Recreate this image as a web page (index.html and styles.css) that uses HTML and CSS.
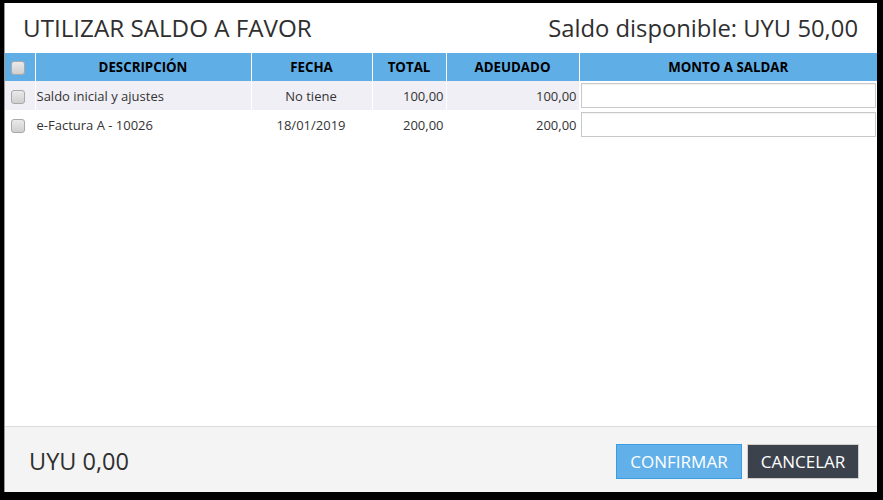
FILE: index.html
```html
<!DOCTYPE html>
<html>
<head>
<meta charset="utf-8">
<link rel="stylesheet" href="styles.css">
</head>
<body>
<div class="modal">
  <div class="modal-header">
    <h1 class="title">UTILIZAR SALDO A FAVOR</h1>
    <div class="saldo">Saldo disponible: UYU 50,00</div>
  </div>
  <div class="modal-body">
    <table class="grid">
      <colgroup>
        <col class="c-check"><col class="c-desc"><col class="c-fecha"><col class="c-total"><col class="c-adeu"><col class="c-monto">
      </colgroup>
      <thead>
        <tr>
          <th class="chk"><span class="cb"></span></th>
          <th>DESCRIPCIÓN</th>
          <th>FECHA</th>
          <th>TOTAL</th>
          <th>ADEUDADO</th>
          <th>MONTO A SALDAR</th>
        </tr>
      </thead>
      <tbody>
        <tr class="odd">
          <td class="chk"><span class="cb"></span></td>
          <td>Saldo inicial y ajustes</td>
          <td class="center">No tiene</td>
          <td class="num">100,00</td>
          <td class="num">100,00</td>
          <td class="inp"><input type="text" class="field"></td>
        </tr>
        <tr>
          <td class="chk"><span class="cb"></span></td>
          <td>e-Factura A - 10026</td>
          <td class="center">18/01/2019</td>
          <td class="num">200,00</td>
          <td class="num">200,00</td>
          <td class="inp"><input type="text" class="field"></td>
        </tr>
      </tbody>
    </table>
  </div>
  <div class="modal-footer">
    <div class="total">UYU 0,00</div>
    <div class="actions">
      <button class="btn btn-primary">CONFIRMAR</button>
      <button class="btn btn-dark">CANCELAR</button>
    </div>
  </div>
</div>
</body>
</html>
```
FILE: styles.css
```css
html, body {
  margin: 0;
  padding: 0;
  background: #000;
  height: 500px;
  overflow: hidden;
}
body {
  font-family: "Open Sans", "Noto Sans", sans-serif;
  color: #333;
  padding: 3px 6px 8px 4px;
  box-sizing: border-box;
}
.modal {
  height: 489px;
  background: #fff;
  display: flex;
  flex-direction: column;
  border-left: 1px solid #9a9a9a;
  box-sizing: border-box;
}
.modal-header {
  height: 50px;
  display: flex;
  align-items: center;
  justify-content: space-between;
  padding: 0 19px 1px 18px;
  flex: none;
  box-sizing: border-box;
}
.title {
  margin: 0;
  font-weight: 400;
  font-size: 24.2px;
  color: #2f2f2f;
}
.saldo {
  font-size: 23.8px;
  color: #2f2f2f;
}
.modal-body {
  flex: 1;
}
.grid {
  width: 100%;
  border-collapse: collapse;
  table-layout: fixed;
  font-size: 13px;
}
.c-check { width: 30px; }
.c-desc { width: 216px; }
.c-fecha { width: 121px; }
.c-total { width: 74px; }
.c-adeu { width: 133px; }
.grid th {
  background: #5fafe6;
  color: #000;
  font-weight: 700;
  font-size: 13.3px;
  height: 28px;
  padding: 0;
  border-left: 1px solid #fff;
  text-align: center;
  vertical-align: middle;
}
.grid th:first-child { border-left: 0; }
.grid td {
  height: 29px;
  padding: 0 2px 0 1px;
  border-left: 1px solid #fff;
  vertical-align: middle;
  color: #333;
  white-space: nowrap;
}
.grid td:first-child { border-left: 0; }
.grid tr.odd td { background: #f0eff5; }
.grid td.chk, .grid th.chk { text-align: left; padding: 0 0 0 6px; }
.center { text-align: center; }
.num { text-align: right; }
.grid td.inp { padding: 0 1px 0 1px; background: #fff !important; }
.cb {
  display: inline-block;
  width: 12px;
  height: 12px;
  border: 1px solid #a9a9a9;
  border-radius: 3px;
  background: linear-gradient(#eaeaea, #cfcfcf);
  vertical-align: middle;
  box-sizing: content-box;
}
.field {
  display: block;
  width: 100%;
  height: 25px;
  box-sizing: border-box;
  border: 1px solid #c8c8c8;
  box-shadow: inset 0 1px 1px rgba(0,0,0,0.05);
  background: #fff;
  margin: 0;
  padding: 0 4px;
  font: inherit;
}
.modal-footer {
  height: 66px;
  flex: none;
  border-top: 1px solid #dcdcdc;
  background: #f4f4f4;
  display: flex;
  align-items: center;
  justify-content: space-between;
  padding: 0 18px 0 24px;
  box-sizing: border-box;
}
.total {
  font-size: 23.5px;
  color: #2f2f2f;
  padding-top: 2px;
}
.actions {
  display: flex;
  gap: 5px;
  padding-top: 3px;
}
.btn {
  font-family: "Open Sans", "Noto Sans", sans-serif;
  font-size: 17px;
  height: 35px;
  padding: 0;
  border-radius: 0;
  cursor: pointer;
}
.btn-primary {
  background: #61b0e9;
  border: 1px solid #3d9be0;
  color: #fff;
  width: 126px;
}
.btn-dark {
  background: #3b424c;
  border: 1px solid #cfcfcf;
  color: #fff;
  width: 112px;
}
```
